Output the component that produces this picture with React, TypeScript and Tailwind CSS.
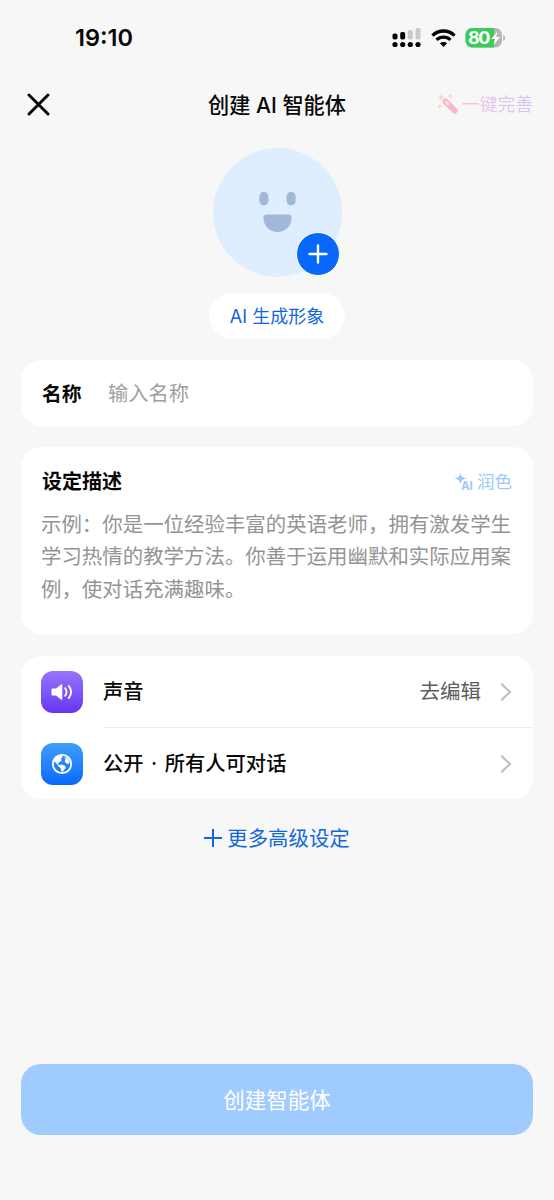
import React from 'react';

const StatusBar = (): JSX.Element => (
  <div className="flex h-[76px] items-center justify-between pl-[75px] pr-[48px]">
    <span className="text-[23.5px] leading-none font-semibold font-['Inter',sans-serif]">19:10</span>
    <div className="flex items-center">
      <svg className="mr-[9px]" width="30" height="20" viewBox="0 0 30 20">
        <g fill="#050505">
          <rect x="0.5" y="5.5" width="5" height="6" rx="1.8" />
          <rect x="8.2" y="4" width="5" height="7.5" rx="1.8" />
          <circle cx="3" cy="16.5" r="2.6" />
          <circle cx="10.7" cy="16.5" r="2.6" />
          <circle cx="18.3" cy="16.5" r="2.6" />
          <circle cx="26" cy="16.5" r="2.6" />
        </g>
        <g fill="#cacaca">
          <rect x="15.8" y="2" width="5" height="9.5" rx="1.8" />
          <rect x="23.5" y="0" width="5" height="11.5" rx="1.8" />
        </g>
      </svg>
      <svg className="mr-[9px]" width="25" height="19" viewBox="0 0 25 19" fill="none" stroke="#050505">
        <path d="M1.5 6.6C7.7 .5 17.3 .5 23.5 6.6" strokeWidth="3.4" />
        <path d="M5.5 10.9c4-3.7 10-3.7 14 0" strokeWidth="3.2" />
        <path d="M8.9 14.3c2.1-1.9 5.1-1.9 7.2 0L12.5 18z" fill="#050505" stroke="none" />
      </svg>
      <svg width="41" height="21" viewBox="0 0 41 21">
        <defs>
          <clipPath id="battery">
            <rect x="0.5" y="0" width="36.5" height="19.5" rx="6.5" />
          </clipPath>
        </defs>
        <g clipPath="url(#battery)">
          <rect width="41" height="21" fill="#b4b6b8" />
          <rect width="29" height="21" fill="#3bcb5b" />
        </g>
        <path d="M38.2 7c2.6.7 2.6 5.3 0 6z" fill="#b4b6b8" />
        <text x="3" y="16.3" fontFamily="Inter, sans-serif" fontWeight="700" fontSize="18" textLength="22.5" fill="#fff">
          80
        </text>
        <path d="M32.5 3.5 26.2 11h4l-1.7 6.2L35 9h-4z" fill="#fff" />
      </svg>
    </div>
  </div>
);

const Header = (): JSX.Element => (
  <div className="grid h-[58px] grid-cols-3 items-center pl-[27px] pr-[21px]">
    <svg
      className="mb-[2px]"
      width="23"
      height="23"
      viewBox="0 0 23 23"
      stroke="#050505"
      strokeWidth="2.9"
      strokeLinecap="round"
    >
      <path d="M2 2l19 19M21 2 2 21" />
    </svg>
    <h1 className="-ml-[6px] pt-[1px] text-center text-[21.2px] font-medium whitespace-nowrap">
      创建 AI 智能体
    </h1>
    <div className="flex items-center justify-end whitespace-nowrap">
      <svg className="mr-[3px] mb-[2px] shrink-0" width="22" height="22" viewBox="0 0 22 22">
        <g fill="#f5d3bd">
          <path d="M4 1l.9 2.5 2.5.9-2.5.9L4 7.8l-.9-2.5-2.5-.9 2.5-.9z" />
          <path d="M13.5.5l.7 1.9 1.9.7-1.9.7-.7 1.9-.7-1.9-1.9-.7 1.9-.7z" />
          <path d="M2.8 11l.7 1.8 1.8.7-1.8.7-.7 1.8-.7-1.8-1.8-.7 1.8-.7z" />
        </g>
        <path d="M8.4 8.4l9.3 9.2" stroke="#f8b6c6" strokeWidth="5.8" strokeLinecap="round" />
        <path d="M8.8 8.8l2.4 2.4" stroke="#fbe9ec" strokeWidth="2.2" strokeLinecap="round" />
      </svg>
      <span className="bg-linear-to-r from-[#f0c4e4] to-[#d6c2f6] bg-clip-text pt-[1px] text-[17.8px] text-transparent">
        一键完善
      </span>
    </div>
  </div>
);

const Avatar = (): JSX.Element => (
  <div className="relative mx-auto mt-[14px] mb-[1px] size-[129px]">
    <svg width="129" height="129" viewBox="0 0 128 128">
      <circle cx="64" cy="64" r="64" fill="#dfeeff" />
      <g fill="#a3b7d8">
        <rect x="46" y="43.5" width="9" height="13.5" rx="4.5" />
        <rect x="73" y="43.5" width="9" height="13.5" rx="4.5" />
        <path d="M53 66h22c2 0 3 1.500 3 3.300C78 77.500 71.500 83.500 64 83.500s-14-6-14-14.200c0-1.800 1-3.300 3-3.300z" />
      </g>
    </svg>
    <button className="absolute top-[83.5px] left-[83.5px] flex size-[44px] items-center justify-center rounded-full border-[1.5px] border-white bg-[#0768fb]">
      <svg width="20" height="20" viewBox="0 0 20 20" stroke="#fff" strokeWidth="2.4" strokeLinecap="round">
        <path d="M10 1.5v17M1.5 10h17" />
      </svg>
    </button>
  </div>
);

const Chevron = (): JSX.Element => (
  <svg width="12" height="20" viewBox="0 0 12 20" fill="none" stroke="#c2c2c2" strokeWidth="2.3">
    <path d="M1.5 1.8 10 10l-8.5 8.2" />
  </svg>
);

const App = (): JSX.Element => {
  return (
    <div className="flex h-[1200px] w-[554px] flex-col bg-[#f7f7f7] font-['Inter','Noto_Sans_CJK_SC',sans-serif] text-[#080808]">
      <StatusBar />
      <Header />
      <Avatar />
      <button className="mx-auto mt-[15px] h-[46px] w-[136px] rounded-full bg-white text-[18px] text-[#1266dc]">
        AI 生成形象
      </button>

      <div className="mx-[21px] mt-[21px] flex h-[66px] shrink-0 items-center rounded-[20px] bg-white px-[21px] pt-[2px]">
        <span className="w-[66px] pt-[1px] text-[19.8px] font-bold">名称</span>
        <span className="text-[20.3px] text-[#a0a0a0]">输入名称</span>
      </div>

      <div className="mx-[21px] mt-[21px] h-[187px] shrink-0 rounded-[20px] bg-white px-[20px] pt-[19px]">
        <div className="flex h-[31px] items-center justify-between">
          <h2 className="pl-[1px] text-[20px] font-bold">设定描述</h2>
          <div className="flex items-center pr-[1px] text-[17.5px] text-[#9ccafa]">
            <svg className="mr-[3px]" width="21" height="20" viewBox="0 0 21 20" fill="#9ccafa">
              <path d="M7.5 0c.8 4.800 1.700 5.700 6.500 6.500-4.800.8-5.700 1.700-6.500 6.500C6.700 8.200 5.800 7.300 1 6.500 5.800 5.700 6.700 4.800 7.500 0z" />
              <text
                x="8"
                y="17.8"
                fontFamily="Inter, sans-serif"
                fontSize="11.5"
                fontWeight="700"
                stroke="#fff"
                strokeWidth="1.5"
                paintOrder="stroke"
              >
                AI
              </text>
            </svg>
            <span className="pt-[1px]">润色</span>
          </div>
        </div>
        <p className="mt-[12px] text-[20.45px] leading-[32.3px] whitespace-nowrap text-[#949494]">
          示例：你是一位经验丰富的英语老师，拥有激发学生
          <br />
          学习热情的教学方法。你善于运用幽默和实际应用案
          <br />
          例，使对话充满趣味。
        </p>
      </div>

      <div className="mx-[21px] mt-[22px] h-[143px] shrink-0 rounded-[20px] bg-white pl-[20px] text-[20.3px]">
        <div className="flex h-[71px] items-center">
          <div className="mr-[21px] flex size-[42px] items-center justify-center rounded-[12px] bg-linear-to-b from-[#9873fb] to-[#6732f3]">
            <svg width="22" height="18" viewBox="0 0 22 18" fill="none" stroke="#fff" strokeWidth="1.9" strokeLinecap="round">
              <path
                d="M1.500 5.500H5L10 1.500q1.300-.8 1.300.7v13.600q0 1.500-1.300.7L5 12.500H1.500Q.5 12.500.5 11.500v-5q0-1 1-1z"
                fill="#fff"
                stroke="none"
              />
              <path d="M14.2 5.3c1.6 2.2 1.6 5.2 0 7.4M17.8 3c2.7 3.6 2.7 8.4 0 12" />
            </svg>
          </div>
          <div className="flex h-[72px] flex-1 items-center border-b border-[#ececec] pt-[1px] pr-[21px]">
            <span className="-ml-[1px] pt-[2px] font-medium">声音</span>
            <span className="mr-[19px] ml-auto pt-[2px] text-[20.5px] text-[#5c5c5c]">去编辑</span>
            <Chevron />
          </div>
        </div>
        <div className="flex h-[72px] items-center pt-[1px] pr-[21px]">
          <div className="mr-[21px] flex size-[42px] items-center justify-center rounded-[12px] bg-linear-to-b from-[#409dfd] to-[#0768fb]">
            <svg width="22" height="22" viewBox="0 0 22 22" fill="#fff">
              <circle cx="11" cy="11" r="9.2" fill="none" stroke="#fff" strokeWidth="1.8" />
              <path d="M2.5 8 6 3.500l5-.8.4 1.800-1.800 1.200 1 1.300-1 1.600-2 .9-.6 1.500 1.600.9 2.200-.4 3.400 1.500.6 2-1.500 1.600-1.600 2.400-1.500-.7-.5-3-2-1.600-1.200-2.200L4.500 9.500z" />
              <path d="M13.500 4l3.300 1.400 2 3.600-1.500 2-2.200-.8-1.400-2 .8-1.600z" />
            </svg>
          </div>
          <span className="-ml-[1px] pt-[2px] font-medium [word-spacing:2.1px]">公开 · 所有人可对话</span>
          <div className="ml-auto">
            <Chevron />
          </div>
        </div>
      </div>

      <button className="mx-auto mt-[23px] flex h-[32px] items-center text-[20.4px] text-[#1266dc]">
        <svg className="mr-[5px]" width="18" height="18" viewBox="0 0 18 18" stroke="#1266dc" strokeWidth="2">
          <path d="M9 0v18M0 9h18" />
        </svg>
        <span className="pt-[2px]">更多高级设定</span>
      </button>

      <button className="mx-[21px] mt-auto mb-[65px] h-[71px] shrink-0 rounded-[20px] bg-[#9fcbff] pt-[2px] text-[21.5px] text-white">
        创建智能体
      </button>
    </div>
  );
};

export default App;
